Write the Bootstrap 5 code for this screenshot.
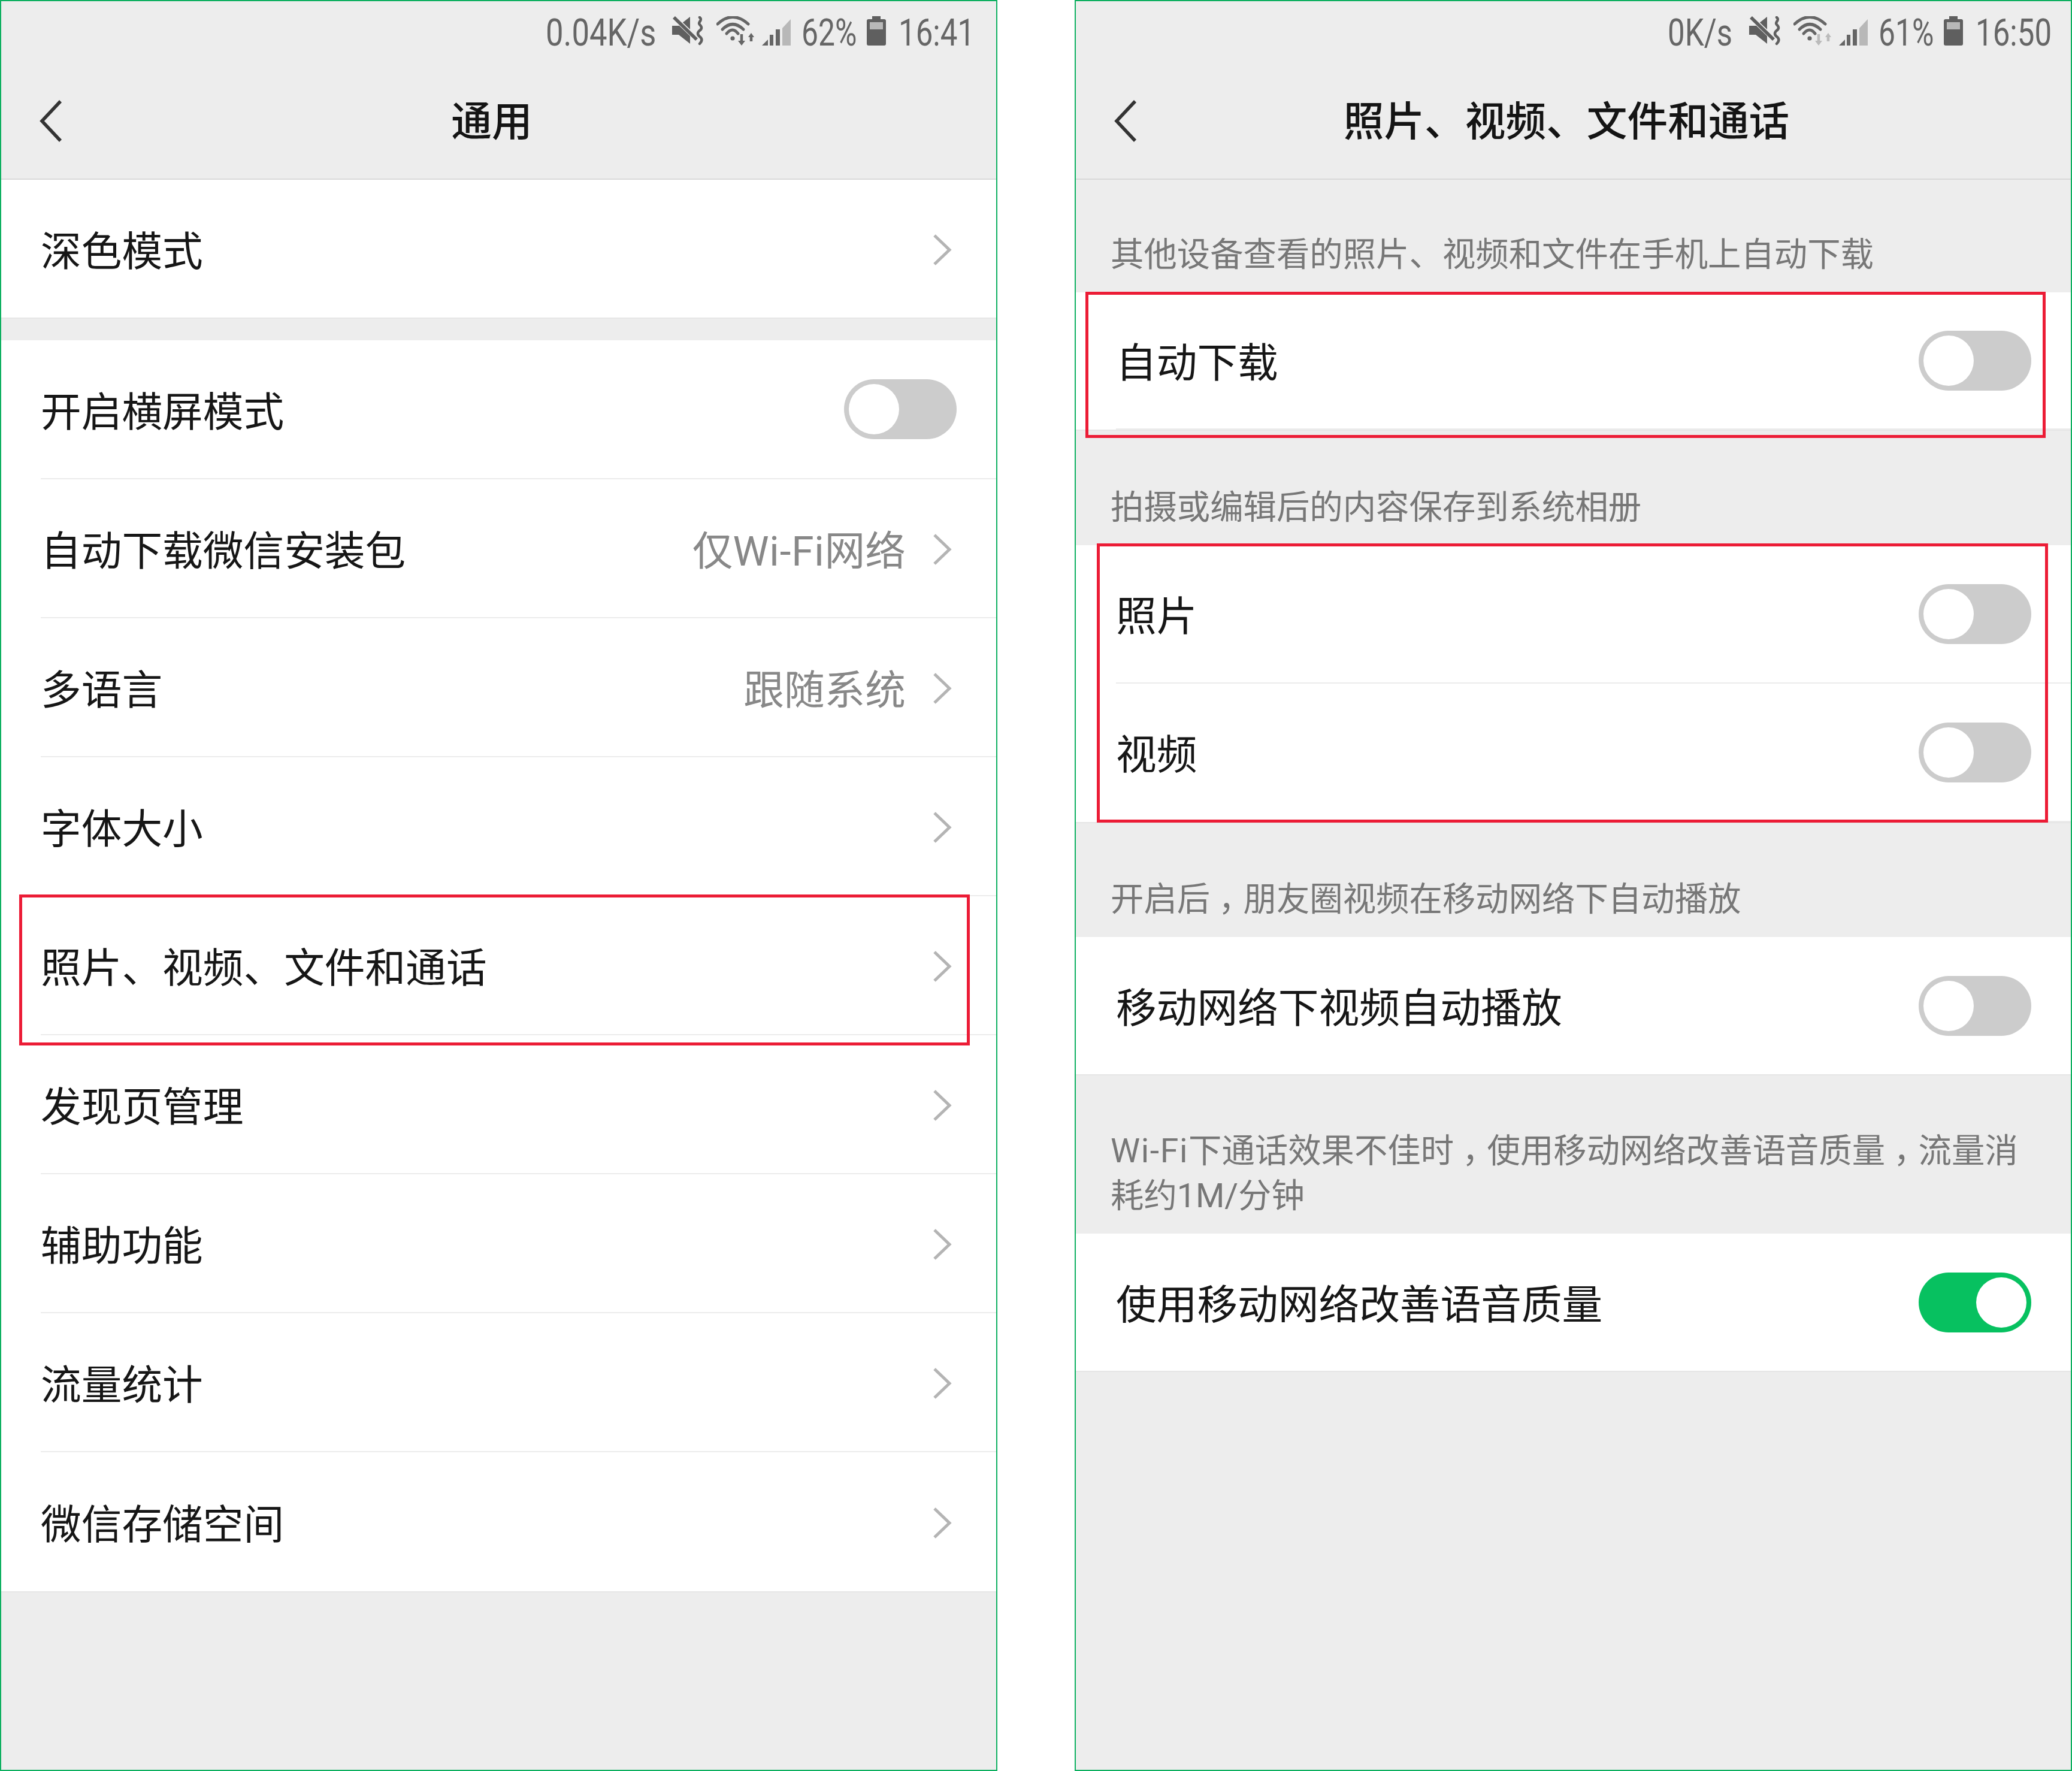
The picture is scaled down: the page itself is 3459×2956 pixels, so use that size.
<!DOCTYPE html>
<html lang="zh-CN">
<head>
<meta charset="utf-8">
<title>通用 / 照片、视频、文件和通话</title>
<link href="https://cdn.jsdelivr.net/npm/bootstrap@5.3.0/dist/css/bootstrap.min.css" rel="stylesheet">
<style>
body{background:#fff;margin:0;font-family:Roboto,"Noto Sans CJK SC",sans-serif;color:#161616}
.phone{width:1665px;height:2956px;background:#ededed;border:2px solid #0fb061}
.appbar{height:298px;border-bottom:2px solid #d9d9d9}
.statbar{height:130px;padding-top:25px;color:#666}
.statbar-a{padding-right:37px}
.statbar-b{padding-right:33px}
.stxt{display:inline-block;font-size:63px;line-height:56px;height:56px;white-space:nowrap;transform-origin:left center}
.w-net-a{width:183px;transform:scaleX(.835)}
.w-net-b{width:108px;transform:scaleX(.81)}
.w-pct{width:93px;transform:scaleX(.79)}
.w-time{width:126px;transform:scaleX(.81)}
.gap-net{margin-right:28px}
.gap-mid{margin-right:21px}
.gap-sig{margin-right:11px}
.gap-bars{margin-right:17px}
.gap-pct{margin-right:16px}
.titlebar{height:166px;padding-left:63px;padding-right:126px;padding-bottom:0}
.titlebar svg{margin-top:-26px}
.apptitle{font-size:67.7px;font-weight:500;line-height:80px;margin-top:-22px;color:#141414}
.setblock{border-bottom:2px solid #e6e6e6}
.setrow{height:232px;padding-left:66px;font-size:67.7px;line-height:80px}
.setrow-b{height:231px;padding-left:67px}
.setrow-short{height:229px}
.setrow-first{height:230px}
.setinner{height:100%;padding-right:66px;border-bottom:2px solid #ececec}
.setrow:last-child .setinner{border-bottom:0}
.rowlabel{margin-top:11px}
.rowvalue{font-size:67.7px;color:#888;margin-right:45px;margin-top:11px}
.latin-wide{letter-spacing:1.6px}
.rowvalue .latin-wide{letter-spacing:.8px}
.cn-comma{font-feature-settings:"halt";padding:0 .25em}
.chev{margin-right:8px;margin-top:3px}
.gap-sec{height:36px}
.note{padding-left:58px;padding-bottom:25px;font-size:55.4px;line-height:75px;color:#777}
.note-1{padding-top:88px}
.note-2{padding-top:91px}
.note-3{padding-top:90px}
.note-4{padding-top:89px}
.tog{display:block;width:188px;height:100px;border-radius:50px;background:#ccc;padding:8px}
.tog-on{background:#07c160}
.tog-knob{display:block;width:84px;height:84px;border-radius:50%;background:#fff}
.tog-on .tog-knob{margin-left:auto}
.hl{border:5px solid #ec1c36;z-index:3}
.hl-a{top:-3px;bottom:-17px;left:30px;right:44px}
.hl-b{top:-1px;bottom:-14px;left:16px;right:42px}
.hl-c{top:-3px;bottom:-1px;left:35px;right:38px}
</style>
</head>
<body>
<main class="d-flex justify-content-between">

<section class="phone d-flex flex-column">
  <header class="appbar">
    <div class="statbar statbar-a d-flex justify-content-end align-items-start">
      <span class="stxt w-net-a gap-net">0.04K/s</span>
      <svg class="gap-mid" width="53" height="50" viewBox="0 0 53 50"><path d="M0 16h11L30 1v45L11 31H0z" fill="#5f5f5f"/><path d="M2 1l40 38" stroke="#ededed" stroke-width="8"/><path d="M3 2l38 37" stroke="#5f5f5f" stroke-width="5.5"/><path d="M46 2c6 5-4 8 0 12s4 7 0 10 -4 7 0 10 5 7 0 12" fill="none" stroke="#5f5f5f" stroke-width="4.5" stroke-linecap="round"/></svg>
      <svg class="gap-sig" width="64" height="52" viewBox="0 0 64 52"><g fill="none" stroke="#666" stroke-width="5" stroke-linecap="round"><path d="M2 13Q27-10 53 13"/><path d="M10 22Q27 5 45 22"/><path d="M17 29Q27 17 36 29"/></g><circle cx="27" cy="37" r="3.6" fill="#666"/><path d="M42 30v12" stroke="#666" stroke-width="4.5"/><path d="M36 41h12l-6 8z" fill="#666"/><path d="M58 42V33" stroke="#666" stroke-width="4.5"/><path d="M53 35h10l-5-7z" fill="#666"/></svg>
      <svg class="gap-bars" width="50" height="46" viewBox="0 0 50 46" style="margin-top:4px"><path d="M1 45l10-10v10z" fill="#666"/><path d="M14 27h6v18h-6z" fill="#666"/><path d="M24 18h7v27h-7z" fill="#666"/><path d="M35 16L49 1v44H35z" fill="#b8b8b8"/></svg>
      <span class="stxt w-pct gap-pct">62%</span>
      <svg class="gap-mid" width="32" height="49" viewBox="0 0 32 49"><path d="M9 0h14v5h6q3 0 3 3v38q0 3-3 3H3q-3 0-3-3V8q0-3 3-3h6z" fill="#5f5f5f"/><path d="M5 10h22v12H5z" fill="#b8b8b8"/></svg>
      <span class="stxt w-time">16:41</span>
    </div>
    <div class="titlebar d-flex align-items-center">
      <svg width="40" height="72" viewBox="0 0 40 72"><path d="M36 3L5 36l31 33" fill="none" stroke="#333" stroke-width="5.5"/></svg>
      <h1 class="apptitle flex-grow-1 text-center mb-0">通用</h1>
    </div>
  </header>

  <div class="setblock bg-white">
    <div class="setrow setrow-first d-flex align-items-center"><div class="setinner flex-grow-1 d-flex align-items-center justify-content-between"><span class="rowlabel">深色模式</span><svg class="chev" width="32" height="54" viewBox="0 0 32 54"><path d="M3 3l25 24L3 51" fill="none" stroke="#b4b4b4" stroke-width="5"/></svg></div></div>
  </div>
  <div class="gap-sec"></div>
  <div class="setblock bg-white">
    <div class="setrow d-flex align-items-center"><div class="setinner flex-grow-1 d-flex align-items-center justify-content-between"><span class="rowlabel">开启横屏模式</span><span class="tog"><span class="tog-knob"></span></span></div></div>
    <div class="setrow d-flex align-items-center"><div class="setinner flex-grow-1 d-flex align-items-center"><span class="rowlabel me-auto">自动下载微信安装包</span><span class="rowvalue">仅<span class="latin-wide">Wi-Fi</span>网络</span><svg class="chev" width="32" height="54" viewBox="0 0 32 54"><path d="M3 3l25 24L3 51" fill="none" stroke="#b4b4b4" stroke-width="5"/></svg></div></div>
    <div class="setrow d-flex align-items-center"><div class="setinner flex-grow-1 d-flex align-items-center"><span class="rowlabel me-auto">多语言</span><span class="rowvalue">跟随系统</span><svg class="chev" width="32" height="54" viewBox="0 0 32 54"><path d="M3 3l25 24L3 51" fill="none" stroke="#b4b4b4" stroke-width="5"/></svg></div></div>
    <div class="setrow d-flex align-items-center"><div class="setinner flex-grow-1 d-flex align-items-center justify-content-between"><span class="rowlabel">字体大小</span><svg class="chev" width="32" height="54" viewBox="0 0 32 54"><path d="M3 3l25 24L3 51" fill="none" stroke="#b4b4b4" stroke-width="5"/></svg></div></div>
    <div class="setrow d-flex align-items-center position-relative"><div class="setinner flex-grow-1 d-flex align-items-center justify-content-between"><span class="rowlabel">照片、视频、文件和通话</span><svg class="chev" width="32" height="54" viewBox="0 0 32 54"><path d="M3 3l25 24L3 51" fill="none" stroke="#b4b4b4" stroke-width="5"/></svg></div><div class="hl hl-a position-absolute"></div></div>
    <div class="setrow d-flex align-items-center"><div class="setinner flex-grow-1 d-flex align-items-center justify-content-between"><span class="rowlabel">发现页管理</span><svg class="chev" width="32" height="54" viewBox="0 0 32 54"><path d="M3 3l25 24L3 51" fill="none" stroke="#b4b4b4" stroke-width="5"/></svg></div></div>
    <div class="setrow d-flex align-items-center"><div class="setinner flex-grow-1 d-flex align-items-center justify-content-between"><span class="rowlabel">辅助功能</span><svg class="chev" width="32" height="54" viewBox="0 0 32 54"><path d="M3 3l25 24L3 51" fill="none" stroke="#b4b4b4" stroke-width="5"/></svg></div></div>
    <div class="setrow d-flex align-items-center"><div class="setinner flex-grow-1 d-flex align-items-center justify-content-between"><span class="rowlabel">流量统计</span><svg class="chev" width="32" height="54" viewBox="0 0 32 54"><path d="M3 3l25 24L3 51" fill="none" stroke="#b4b4b4" stroke-width="5"/></svg></div></div>
    <div class="setrow d-flex align-items-center"><div class="setinner flex-grow-1 d-flex align-items-center justify-content-between"><span class="rowlabel">微信存储空间</span><svg class="chev" width="32" height="54" viewBox="0 0 32 54"><path d="M3 3l25 24L3 51" fill="none" stroke="#b4b4b4" stroke-width="5"/></svg></div></div>
  </div>
</section>

<section class="phone d-flex flex-column">
  <header class="appbar">
    <div class="statbar statbar-b d-flex justify-content-end align-items-start">
      <span class="stxt w-net-b gap-net">0K/s</span>
      <svg class="gap-mid" width="53" height="50" viewBox="0 0 53 50"><path d="M0 16h11L30 1v45L11 31H0z" fill="#5f5f5f"/><path d="M2 1l40 38" stroke="#ededed" stroke-width="8"/><path d="M3 2l38 37" stroke="#5f5f5f" stroke-width="5.5"/><path d="M46 2c6 5-4 8 0 12s4 7 0 10 -4 7 0 10 5 7 0 12" fill="none" stroke="#5f5f5f" stroke-width="4.5" stroke-linecap="round"/></svg>
      <svg class="gap-sig" width="64" height="52" viewBox="0 0 64 52"><g fill="none" stroke="#666" stroke-width="5" stroke-linecap="round"><path d="M2 13Q27-10 53 13"/><path d="M10 22Q27 5 45 22"/><path d="M17 29Q27 17 36 29"/></g><circle cx="27" cy="37" r="3.6" fill="#666"/><path d="M42 30v12" stroke="#bbb" stroke-width="4.5"/><path d="M36 41h12l-6 8z" fill="#bbb"/><path d="M58 42V33" stroke="#bbb" stroke-width="4.5"/><path d="M53 35h10l-5-7z" fill="#bbb"/></svg>
      <svg class="gap-bars" width="50" height="46" viewBox="0 0 50 46" style="margin-top:4px"><path d="M1 45l10-10v10z" fill="#666"/><path d="M14 27h6v18h-6z" fill="#666"/><path d="M24 18h7v27h-7z" fill="#666"/><path d="M35 16L49 1v44H35z" fill="#b8b8b8"/></svg>
      <span class="stxt w-pct gap-pct">61%</span>
      <svg class="gap-mid" width="32" height="49" viewBox="0 0 32 49"><path d="M9 0h14v5h6q3 0 3 3v38q0 3-3 3H3q-3 0-3-3V8q0-3 3-3h6z" fill="#5f5f5f"/><path d="M5 10h22v12H5z" fill="#b8b8b8"/></svg>
      <span class="stxt w-time">16:50</span>
    </div>
    <div class="titlebar d-flex align-items-center">
      <svg width="40" height="72" viewBox="0 0 40 72"><path d="M36 3L5 36l31 33" fill="none" stroke="#333" stroke-width="5.5"/></svg>
      <h1 class="apptitle flex-grow-1 text-center mb-0">照片、视频、文件和通话</h1>
    </div>
  </header>

  <p class="note note-1 mb-0">其他设备查看的照片、视频和文件在手机上自动下载</p>
  <div class="setblock bg-white position-relative">
    <div class="setrow setrow-b setrow-short d-flex align-items-center"><div class="setinner flex-grow-1 d-flex align-items-center justify-content-between"><span class="rowlabel">自动下载</span><span class="tog"><span class="tog-knob"></span></span></div></div>
    <div class="hl hl-b position-absolute"></div>
  </div>

  <p class="note note-2 mb-0">拍摄或编辑后的内容保存到系统相册</p>
  <div class="setblock bg-white position-relative">
    <div class="setrow setrow-b d-flex align-items-center"><div class="setinner flex-grow-1 d-flex align-items-center justify-content-between"><span class="rowlabel">照片</span><span class="tog"><span class="tog-knob"></span></span></div></div>
    <div class="setrow setrow-b d-flex align-items-center"><div class="setinner flex-grow-1 d-flex align-items-center justify-content-between"><span class="rowlabel">视频</span><span class="tog"><span class="tog-knob"></span></span></div></div>
    <div class="hl hl-c position-absolute"></div>
  </div>

  <p class="note note-3 mb-0">开启后<span class="cn-comma">，</span>朋友圈视频在移动网络下自动播放</p>
  <div class="setblock bg-white">
    <div class="setrow setrow-b setrow-short d-flex align-items-center"><div class="setinner flex-grow-1 d-flex align-items-center justify-content-between"><span class="rowlabel">移动网络下视频自动播放</span><span class="tog"><span class="tog-knob"></span></span></div></div>
  </div>

  <p class="note note-4 mb-0"><span class="latin-wide">Wi-Fi</span>下通话效果不佳时<span class="cn-comma">，</span>使用移动网络改善语音质量<span class="cn-comma">，</span>流量消<br>耗约1M/分钟</p>
  <div class="setblock bg-white">
    <div class="setrow setrow-b setrow-short d-flex align-items-center"><div class="setinner flex-grow-1 d-flex align-items-center justify-content-between"><span class="rowlabel">使用移动网络改善语音质量</span><span class="tog tog-on"><span class="tog-knob"></span></span></div></div>
  </div>
</section>

</main>
<script src="https://cdn.jsdelivr.net/npm/bootstrap@5.3.0/dist/js/bootstrap.bundle.min.js"></script>
</body>
</html>
